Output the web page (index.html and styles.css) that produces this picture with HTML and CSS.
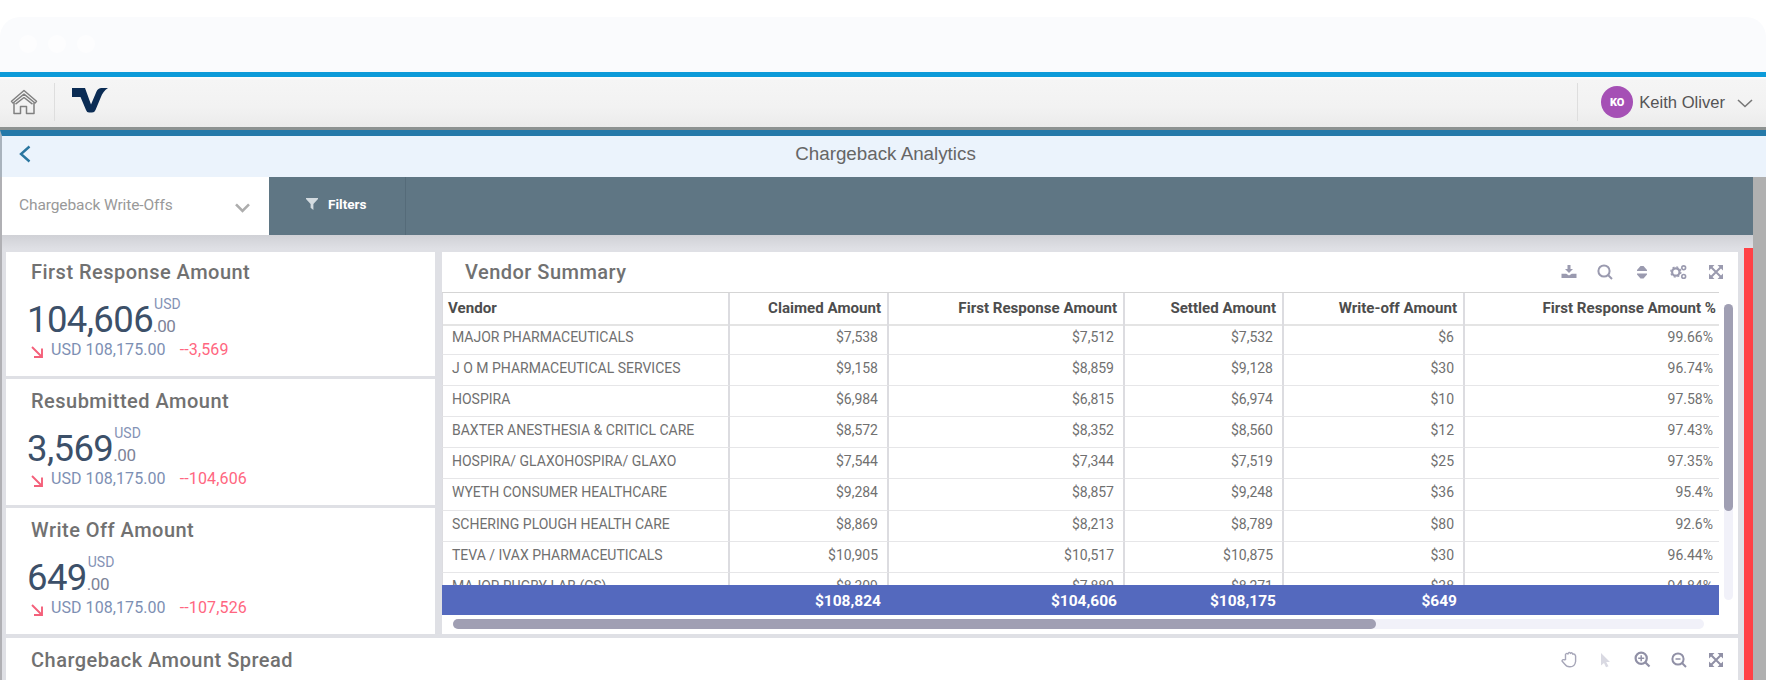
FILE: index.html
```html
<!DOCTYPE html>
<html lang="en">
    <head>
        <meta charset="utf-8">
        <title>Chargeback Analytics</title>
        <link rel="stylesheet" href="styles.css">
    </head>
    <body>
        <div class="window-bar"><i></i><i></i><i></i></div>
        <header>
            <div class="home">
                <svg width="28" height="26" viewBox="0 0 28 26" fill="none" stroke="#808080" stroke-width="1.5" stroke-linejoin="round">
                    <path d="M1.5 12.2 L14 1.5 L26.5 12.2 L25 14 L14 5.2 L3 14 Z"/>
                    <path d="M4 13.5 V24.5 H10.5 V17.5 H16.5 V24.5 H24 V13.5 M14 8.5 L5.5 15.2 M14 8.5 L22.5 15.2"/>
                </svg>
            </div>
            <svg class="logo" width="36" height="25" viewBox="0 0 36 25">
                <path fill="#0b2c54" d="M0 0 H13 L19 16.5 L24.5 3.5 Q26 0 29.5 0 H36 C32.5 2 30.5 5 28.5 10 L23.5 22 Q22.5 24.5 20 24.5 H17 Q14.8 24.5 14 22 L8.5 9 H0 Z"/>
            </svg>
            <div class="user">
                <div class="avatar">KO</div>
                <span>Keith Oliver</span>
                <svg width="16" height="9" viewBox="0 0 16 9" fill="none" stroke="#777" stroke-width="1.6">
                    <path d="M1 1 L8 7.5 L15 1"/>
                </svg>
            </div>
        </header>
        <div class="title-bar">
            <svg width="12" height="18" viewBox="0 0 12 18" fill="none" stroke="#2a76a0" stroke-width="2.4">
                <path d="M10.5 1.5 L2 9 L10.5 16.5"/>
            </svg>
            <h1>Chargeback Analytics</h1>
        </div>
        <div class="page">
            <div class="toolbar">
                <div class="select">
                    <span>Chargeback Write-Offs</span>
                    <svg width="15" height="10" viewBox="0 0 15 10" fill="none" stroke="#adadad" stroke-width="2.6">
                        <path d="M1 1.3 L7.5 7.8 L14 1.3"/>
                    </svg>
                </div>
                <div class="filters">
                    <svg width="12" height="12" viewBox="0 0 12 12" fill="#d3dbe0"><path d="M0 0 H12 V1 L7.4 6 V12 L4.6 9.8 V6 L0 1 Z"/></svg>
                    <span>Filters</span>
                </div>
            </div>
            <main>
                <div class="board">
                    <div class="kpis">
                        <section class="card kpi">
                            <h2>First Response Amount</h2>
                            <div class="value"><b>104,606</b><span><sup>USD</sup><sub>.00</sub></span></div>
                            <div class="compare">
                                <svg width="12" height="12" viewBox="0 0 12 12"><path d="M1 1 L10 10 M11 2.5 V11 H3"/></svg>
                                <span>USD 108,175.00</span><em>--3,569</em>
                            </div>
                        </section>
                        <section class="card kpi">
                            <h2>Resubmitted Amount</h2>
                            <div class="value"><b>3,569</b><span><sup>USD</sup><sub>.00</sub></span></div>
                            <div class="compare">
                                <svg width="12" height="12" viewBox="0 0 12 12"><path d="M1 1 L10 10 M11 2.5 V11 H3"/></svg>
                                <span>USD 108,175.00</span><em>--104,606</em>
                            </div>
                        </section>
                        <section class="card kpi">
                            <h2>Write Off Amount</h2>
                            <div class="value"><b>649</b><span><sup>USD</sup><sub>.00</sub></span></div>
                            <div class="compare">
                                <svg width="12" height="12" viewBox="0 0 12 12"><path d="M1 1 L10 10 M11 2.5 V11 H3"/></svg>
                                <span>USD 108,175.00</span><em>--107,526</em>
                            </div>
                        </section>
                    </div>
                    <section class="card vendors">
                        <div class="card-head">
                            <h2>Vendor Summary</h2>
                            <div class="tools">
                                <svg width="16" height="16" viewBox="0 0 16 16" fill="#9a9aaf"><path d="M6.5 1 H9.5 V5 H12 L8 9 L4 5 H6.5 Z M.5 9.8 H5.2 L8 11.6 L10.8 9.8 H15.5 V14 H.5 Z"/></svg>
                                <svg width="16" height="16" viewBox="0 0 16 16" fill="none" stroke="#9a9aaf" stroke-width="2"><circle cx="7" cy="7" r="5.6"/><path d="M11 11 L15 15"/></svg>
                                <svg width="16" height="16" viewBox="0 0 16 16" fill="#9a9aaf"><path d="M3 7 V6 L6.5 2 H9.5 L13 6 V7 Z M3 9.5 H13 V10.5 L9.5 14.5 H6.5 L3 10.5 Z"/></svg>
                                <svg width="17" height="16" viewBox="0 0 17 16" fill="none" stroke="#9a9aaf"><circle cx="5.8" cy="8" r="3.7" stroke-width="2.2"/><circle cx="5.8" cy="8" r="5.1" stroke-width="1.2" stroke-dasharray="2 2"/><circle cx="13.7" cy="3.8" r="1.9" stroke-width="1.6"/><circle cx="13.7" cy="12.4" r="1.9" stroke-width="1.6"/></svg>
                                <svg width="16" height="16" viewBox="0 0 16 16" fill="#9a9aaf" stroke="#9a9aaf"><path stroke="none" d="M1 1 H6.5 L1 6.5 Z M15 1 V6.5 L9.5 1 Z M1 15 V9.5 L6.5 15 Z M15 15 H9.5 L15 9.5 Z"/><path stroke-width="2" d="M3 3 L13 13 M13 3 L3 13"/></svg>
                            </div>
                        </div>
                        <div class="table-area">
                            <table>
                                <thead>
                                    <tr><th>Vendor</th><th>Claimed Amount</th><th>First Response Amount</th><th>Settled Amount</th><th>Write-off Amount</th><th>First Response Amount %</th></tr>
                                </thead>
                                <tbody>
                                    <tr><td>MAJOR PHARMACEUTICALS</td><td>$7,538</td><td>$7,512</td><td>$7,532</td><td>$6</td><td>99.66%</td></tr>
                                    <tr><td>J O M PHARMACEUTICAL SERVICES</td><td>$9,158</td><td>$8,859</td><td>$9,128</td><td>$30</td><td>96.74%</td></tr>
                                    <tr><td>HOSPIRA</td><td>$6,984</td><td>$6,815</td><td>$6,974</td><td>$10</td><td>97.58%</td></tr>
                                    <tr><td>BAXTER ANESTHESIA &amp; CRITICL CARE</td><td>$8,572</td><td>$8,352</td><td>$8,560</td><td>$12</td><td>97.43%</td></tr>
                                    <tr><td>HOSPIRA/ GLAXOHOSPIRA/ GLAXO</td><td>$7,544</td><td>$7,344</td><td>$7,519</td><td>$25</td><td>97.35%</td></tr>
                                    <tr><td>WYETH CONSUMER HEALTHCARE</td><td>$9,284</td><td>$8,857</td><td>$9,248</td><td>$36</td><td>95.4%</td></tr>
                                    <tr><td>SCHERING PLOUGH HEALTH CARE</td><td>$8,869</td><td>$8,213</td><td>$8,789</td><td>$80</td><td>92.6%</td></tr>
                                    <tr><td>TEVA / IVAX PHARMACEUTICALS</td><td>$10,905</td><td>$10,517</td><td>$10,875</td><td>$30</td><td>96.44%</td></tr>
                                    <tr><td>MAJOR RUGBY LAB (CS)</td><td>$8,309</td><td>$7,880</td><td>$8,271</td><td>$38</td><td>94.84%</td></tr>
                                </tbody>
                                <tfoot>
                                    <tr><td></td><td>$108,824</td><td>$104,606</td><td>$108,175</td><td>$649</td><td></td></tr>
                                </tfoot>
                            </table>
                            <div class="scroll-y"><div></div></div>
                        </div>
                        <div class="scroll-x"><div></div></div>
                    </section>
                    <section class="card spread">
                        <div class="card-head">
                            <h2>Chargeback Amount Spread</h2>
                            <div class="tools">
                                <svg width="16" height="17" viewBox="0 0 16 17" fill="none" stroke="#a6a6b8" stroke-width="1.4" stroke-linejoin="round"><path d="M4.5 9 V3.5 Q5.8 1.6 7 3 Q8 0 9.4 2.4 Q11 .8 11.8 3.2 Q13.8 2.6 14.6 5 V10.5 Q13.8 15.8 9 15.8 Q5.5 16 3.8 13.2 L1 10 Q1.4 7.8 4.5 9"/></svg>
                                <svg width="16" height="16" viewBox="0 0 16 16" fill="#d9d9e2"><path d="M4 1 L13 10 H9.2 L11.5 14.2 L9 15.2 L7 11 L4 13.5 Z"/></svg>
                                <svg width="17" height="17" viewBox="0 0 17 17" fill="none" stroke="#9090a6" stroke-width="2.2"><circle cx="7.2" cy="7.2" r="5.6"/><path d="M11 11 L15.5 15.5"/><path stroke-width="1.5" d="M4.2 7.2 H10.2 M7.2 4.2 V10.2"/></svg>
                                <svg width="16" height="16" viewBox="0 0 16 16" fill="none" stroke="#9090a6" stroke-width="2"><circle cx="7" cy="7" r="5.6"/><path d="M11 11 L15 15"/><path stroke-width="1.5" d="M4.5 7 H9.5"/></svg>
                                <svg width="16" height="16" viewBox="0 0 16 16" fill="#9090a6" stroke="#9090a6"><path stroke="none" d="M1 1 H6.5 L1 6.5 Z M15 1 V6.5 L9.5 1 Z M1 15 V9.5 L6.5 15 Z M15 15 H9.5 L15 9.5 Z"/><path stroke-width="2" d="M3 3 L13 13 M13 3 L3 13"/></svg>
                            </div>
                        </div>
                    </section>
                </div>
                <div class="alert-strip"></div>
            </main>
        </div>
    </body>
</html>
```
FILE: styles.css
```css
* {
    box-sizing: border-box;
}

html, body {
    margin: 0;
    height: 680px;
    overflow: hidden;
    background: #ffffff;
    font-family: Roboto, "Liberation Sans", sans-serif;
    color: #666666;
}

h1, h2 {
    margin: 0;
}

.window-bar {
    height: 55px;
    margin-top: 17px;
    padding: 18px 0 0 19px;
    display: flex;
    gap: 11px;
    background: #fafbfd;
    border-radius: 20px 20px 0 0;
}

.window-bar i {
    width: 18px;
    height: 18px;
    border-radius: 50%;
    background: #fdfdfe;
}

header {
    height: 58px;
    display: flex;
    align-items: center;
    border-top: 5px solid #0d9bd9;
    border-bottom: 3px solid #8d9291;
    background: linear-gradient(#ffffff, #f5f5f5 3px, #f2f2f2 60%, #ebebeb);
}

.home {
    width: 55px;
    height: 38px;
    padding: 6px 0 0 10px;
    border-right: 1px solid #dedede;
}

.logo {
    margin: -3px 0 0 17px;
}

.user {
    height: 38px;
    margin-left: auto;
    padding: 0 13px 0 23px;
    display: flex;
    align-items: center;
    border-left: 1px solid #dedede;
    font-family: "Liberation Sans", sans-serif;
    font-size: 16.6px;
    color: #555555;
}

.avatar {
    width: 32px;
    height: 32px;
    margin-right: 6px;
    border-radius: 50%;
    background: #a550b5;
    color: #ffffff;
    font: 900 11px/34px Roboto, sans-serif;
    text-align: center;
}

.user span {
    margin-top: 1px;
}

.user svg {
    margin: 2px 0 0 12px;
}

.title-bar {
    height: 47px;
    display: flex;
    align-items: center;
    padding: 0 0 6px 17px;
    border-top: 6px solid #2579a9;
    border-left: 2px solid #a9b3bd;
    background: #ebf3fc;
}

.title-bar h1 {
    flex: 1;
    margin-right: 26px;
    font: 18.8px "Liberation Sans", sans-serif;
    text-align: center;
}

.page {
    height: 503px;
    border-left: 2px solid #b0b0b4;
    border-right: 13px solid #b0b0b0;
    background: #dfe0e5;
}

.toolbar {
    height: 58px;
    display: flex;
    background: #5f7684;
}

.select {
    width: 267px;
    padding: 0 19px 0 17px;
    display: flex;
    align-items: center;
    justify-content: space-between;
    background: #ffffff;
    color: #999999;
    font-size: 15.5px;
}

.select span {
    margin-top: -3px;
    letter-spacing: -0.1px;
}

.select svg {
    margin-top: 4px;
}

.filters {
    width: 137px;
    padding: 0 0 4px 37px;
    display: flex;
    align-items: center;
    gap: 10px;
    border-right: 1px solid #556b79;
    color: #ffffff;
    font-size: 13.6px;
    font-weight: 700;
}

main {
    height: 445px;
    padding: 13px 0 0 4px;
    display: flex;
    background: linear-gradient(#d0d1d6, #dfe0e5 14px);
}

.board {
    width: 1732px;
    margin-right: 6px;
    padding-top: 4px;
    display: grid;
    grid-template-columns: 429px 1fr;
    grid-template-rows: 382px 1fr;
    gap: 4px 7px;
}

.alert-strip {
    width: 9px;
    background: #ff4145;
}

.card {
    background: #ffffff;
}

.card h2 {
    font-size: 20px;
    font-weight: 500;
    line-height: 24px;
    letter-spacing: 0.48px;
    color: #717171;
}

.kpis {
    display: grid;
    grid-template-rows: 124px 126px 126px;
    gap: 3px;
}

.kpi {
    padding: 8px 0 0 25px;
}

.kpi + .kpi {
    padding-top: 10px;
}

.value {
    height: 45px;
    margin: 5px 0 0 -4px;
    display: flex;
}

.value b {
    font-size: 36.5px;
    font-weight: 400;
    line-height: 61px;
    color: #3c5069;
    letter-spacing: -0.6px;
}

.value span {
    display: flex;
    flex-direction: column;
}

.value sup {
    margin: 5px 0 0 1px;
    font-size: 14px;
    line-height: 21px;
    color: #8492b5;
}

.value sub {
    font-size: 17px;
    line-height: 22px;
    letter-spacing: -0.4px;
    color: #7d8398;
}

.compare {
    display: flex;
    align-items: center;
    font-size: 16px;
    line-height: 32px;
    color: #7d8fb3;
}

.compare svg {
    margin: 3px 8px 0 0;
    fill: none;
    stroke: #f4607a;
    stroke-width: 1.9;
}

.compare span {
    letter-spacing: 0.07px;
}

.compare em {
    margin-left: 14px;
    font-style: normal;
    letter-spacing: 0.15px;
    color: #ff6680;
}

.card-head {
    height: 40px;
    display: flex;
    align-items: center;
    justify-content: space-between;
    padding: 0 14px 1px 23px;
}

.tools {
    display: flex;
    align-items: center;
    gap: 20.6px;
}

.table-area {
    display: flex;
    height: 323px;
}

table {
    width: 1277px;
    height: 323px;
    display: flex;
    flex-direction: column;
}

tr {
    display: grid;
    grid-template-columns: 288px 159px 236px 159px 181px 254px;
}

th, td {
    padding: 0 10px 0 0;
    border-right: 2px solid #dcdce0;
    text-align: right;
    white-space: nowrap;
}

th:last-child, td:last-child {
    border-right: none;
}

th:first-child, td:first-child {
    border-left: 1px solid #dcdce0;
    text-align: left;
}

thead {
    height: 34px;
    border-top: 1px solid #d5d5d5;
    border-bottom: 2px solid #e4e4e4;
}

th {
    padding: 0 6px 0 5px;
    font-size: 15.1px;
    font-weight: 700;
    line-height: 31px;
    color: #4d4d4d;
}

th:last-child {
    padding-right: 3px;
}

tbody {
    flex: 1;
    margin-top: -2px;
    overflow: hidden;
}

tbody td {
    height: 31.1px;
    padding-right: 9px;
    border-bottom: 1px solid #e6e6e8;
    font-size: 14px;
    line-height: 27px;
    color: #707070;
}

tbody td:first-child {
    padding-left: 9px;
}

tbody td:last-child {
    padding-right: 6px;
}

tfoot {
    height: 30px;
    background: #5469be;
}

tfoot td, tfoot td:first-child {
    padding-right: 6px;
    border-color: transparent;
    font-size: 15.5px;
    font-weight: 700;
    line-height: 32px;
    color: #ffffff;
}

.scroll-y {
    width: 9px;
    height: 296px;
    margin: 12px 0 0 5px;
    border-radius: 5px;
    background: #f1f1f9;
}

.scroll-y div {
    height: 207px;
    border-radius: 5px;
    background: #a09fb3;
}

.scroll-x {
    width: 1251px;
    height: 10px;
    margin: 4px 0 0 11px;
    border-radius: 5px;
    background: #f1f1f9;
}

.scroll-x div {
    width: 923px;
    height: 10px;
    border-radius: 5px;
    background: #a09fb3;
}

.spread {
    grid-column: 1 / 3;
}

.spread .card-head {
    height: 44px;
    padding-left: 25px;
}
```
